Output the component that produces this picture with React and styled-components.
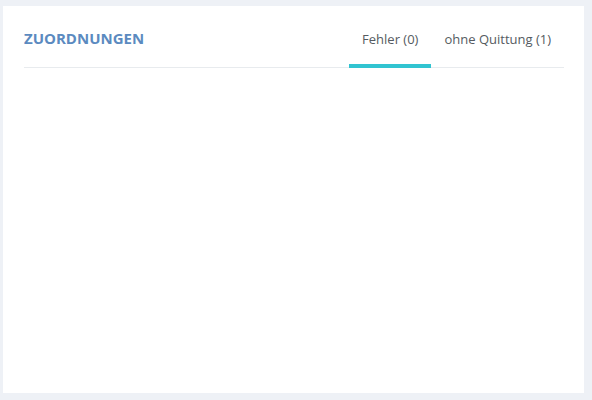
import React, { useState } from "react";
import styled, { createGlobalStyle } from "styled-components";

const Global = createGlobalStyle`
  html, body {
    margin: 0;
    padding: 0;
    background: #eef1f6;
    font-family: "Open Sans", "Liberation Sans", sans-serif;
  }
`;

const Page = styled.div`
  height: 400px;
  box-sizing: border-box;
  padding: 6px 8px 7px 3px;
  display: flex;
`;

const Card = styled.div`
  flex: 1;
  background: #fff;
  padding: 0 20px 0 21px;
  display: flex;
  flex-direction: column;
`;

const Header = styled.div`
  display: flex;
  align-items: stretch;
  justify-content: space-between;
  height: 61px;
  border-bottom: 1px solid #e8ebee;
`;

const Title = styled.h2`
  margin: 0;
  padding-top: 22px;
  font-size: 15px;
  font-weight: 700;
  color: #5b8ac0;
`;

const Tabs = styled.div`
  display: flex;
  align-items: stretch;
`;

const Tab = styled.button`
  border: none;
  background: none;
  font-family: inherit;
  font-size: 13px;
  color: #555b61;
  padding: 24px 13px 0;
  display: flex;
  align-items: flex-start;
  cursor: pointer;
  border-bottom: 4px solid ${(p) => (p.$active ? "#31c4d1" : "transparent")};
  margin-bottom: -1px;
`;

export default function App() {
  const [active, setActive] = useState(0);
  const tabs = ["Fehler (0)", "ohne Quittung (1)"];
  return (
    <>
      <Global />
      <Page>
        <Card>
          <Header>
            <Title>ZUORDNUNGEN</Title>
            <Tabs>
              {tabs.map((t, i) => (
                <Tab key={t} $active={active === i} onClick={() => setActive(i)}>
                  {t}
                </Tab>
              ))}
            </Tabs>
          </Header>
        </Card>
      </Page>
    </>
  );
}
